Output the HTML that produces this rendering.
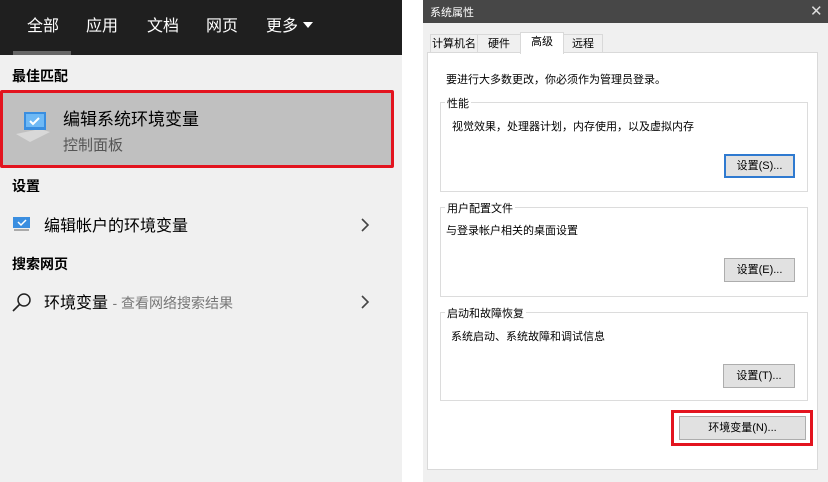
<!DOCTYPE html>
<html><head><meta charset="utf-8"><style>
*{margin:0;padding:0;box-sizing:border-box}
body{width:828px;height:482px;background:#fff;position:relative;overflow:hidden;font-family:"Liberation Sans","Noto Sans CJK SC",sans-serif;color:#000}
.a{position:absolute;white-space:nowrap}
.btn{position:absolute;background:#e1e1e1;border:1px solid #adadad;font-size:11px;text-align:center;color:#000}
.grp{position:absolute;border:1px solid #dcdcdc}
.gl{position:absolute;background:#fff;font-size:11px;padding:0 2px;top:-8px;left:4px}
.tab{position:absolute;border:1px solid #d9d9d9;background:#f0f0f0;font-size:11px;text-align:center;line-height:18px}
</style></head><body>
<div class="a" style="left:0;top:0;width:402px;height:55px;background:#1f1f1f"></div>
<div class="a" style="left:13px;top:51px;width:58px;height:4px;background:#666"></div>
<div class="a" style="left:27px;top:12px;font-size:16px;color:#fff">全部</div>
<div class="a" style="left:86px;top:12px;font-size:16px;color:#fff">应用</div>
<div class="a" style="left:147px;top:12px;font-size:16px;color:#fff">文档</div>
<div class="a" style="left:206px;top:12px;font-size:16px;color:#fff">网页</div>
<div class="a" style="left:266px;top:12px;font-size:16px;color:#fff">更多</div>
<svg class="a" style="left:302px;top:21px" width="12" height="8"><path d="M1 1h10L6 7z" fill="#fff"/></svg>
<div class="a" style="left:0;top:55px;width:402px;height:427px;background:#f0f0f0"></div>
<div class="a" style="left:12px;top:66px;font-size:14px;font-weight:bold">最佳匹配</div>
<div class="a" style="left:0;top:90px;width:394px;height:78px;background:#c0c0c0;border:3px solid #e3141f;border-radius:2px"></div>
<svg class="a" style="left:14px;top:106px" width="36" height="36"><path d="M2 28l14 8 20-10-10-3z" fill="#d8d8d8"/><rect x="10" y="6" width="22" height="18" fill="#3a8ee0"/><rect x="12" y="8" width="18" height="13" fill="#6fb9f5"/><path d="M16 15l3 3 6-6" stroke="#fff" stroke-width="2" fill="none"/></svg>
<div class="a" style="left:63px;top:105px;font-size:17px">编辑系统环境变量</div>
<div class="a" style="left:63px;top:134px;font-size:15px;color:#555">控制面板</div>
<div class="a" style="left:12px;top:176px;font-size:14px;font-weight:bold">设置</div>
<svg class="a" style="left:12px;top:216px" width="20" height="16"><rect x="1" y="1" width="17" height="11" fill="#3a8ee0"/><path d="M6 6l3 3 5-5" stroke="#fff" stroke-width="1.5" fill="none"/><rect x="2" y="13" width="15" height="2" fill="#aaa"/></svg>
<div class="a" style="left:44px;top:212px;font-size:16px">编辑帐户的环境变量</div>
<svg class="a" style="left:360px;top:218px" width="10" height="14"><path d="M2 1l6 6-6 6" stroke="#444" stroke-width="1.6" fill="none"/></svg>
<div class="a" style="left:12px;top:254px;font-size:14px;font-weight:bold">搜索网页</div>
<svg class="a" style="left:11px;top:291px" width="22" height="22"><circle cx="13" cy="9" r="6" stroke="#222" stroke-width="1.5" fill="none"/><path d="M9 13L2 20" stroke="#222" stroke-width="1.6"/></svg>
<div class="a" style="left:44px;top:289px;font-size:16px">环境变量 <span style="font-size:14px;color:#777">- 查看网络搜索结果</span></div>
<svg class="a" style="left:360px;top:295px" width="10" height="14"><path d="M2 1l6 6-6 6" stroke="#444" stroke-width="1.6" fill="none"/></svg>
<div class="a" style="left:423px;top:0;width:405px;height:482px;background:#f0f0f0"></div>
<div class="a" style="left:423px;top:0;width:405px;height:23px;background:#474747"></div>
<div class="a" style="left:430px;top:4px;font-size:11px;color:#fff">系统属性</div>
<div class="a" style="left:810px;top:2px;font-size:15px;color:#ddd">✕</div>
<div class="a" style="left:427px;top:52px;width:391px;height:418px;background:#fff;border:1px solid #d9d9d9"></div>
<div class="tab" style="left:430px;top:34px;width:48px;height:19px">计算机名</div>
<div class="tab" style="left:477px;top:34px;width:44px;height:19px">硬件</div>
<div class="tab" style="left:520px;top:32px;width:44px;height:22px;border-bottom:none;background:#fff;line-height:18px">高级</div>
<div class="tab" style="left:563px;top:34px;width:40px;height:19px">远程</div>
<div class="a" style="left:446px;top:71px;font-size:11px">要进行大多数更改，你必须作为管理员登录。</div>
<div class="grp" style="left:440px;top:102px;width:368px;height:90px"><span class="gl">性能</span></div>
<div class="a" style="left:452px;top:118px;font-size:11px">视觉效果，处理器计划，内存使用，以及虚拟内存</div>
<div class="btn" style="left:724px;top:154px;width:71px;height:24px;border:2px solid #2f7ad0;line-height:20px">设置(S)...</div>
<div class="grp" style="left:440px;top:207px;width:368px;height:90px"><span class="gl">用户配置文件</span></div>
<div class="a" style="left:446px;top:222px;font-size:11px">与登录帐户相关的桌面设置</div>
<div class="btn" style="left:724px;top:258px;width:71px;height:24px;line-height:22px">设置(E)...</div>
<div class="grp" style="left:440px;top:312px;width:368px;height:89px"><span class="gl">启动和故障恢复</span></div>
<div class="a" style="left:451px;top:328px;font-size:11px">系统启动、系统故障和调试信息</div>
<div class="btn" style="left:723px;top:364px;width:72px;height:24px;line-height:22px">设置(T)...</div>
<div class="a" style="left:671px;top:410px;width:142px;height:36px;border:3px solid #e3141f"></div>
<div class="btn" style="left:679px;top:416px;width:127px;height:24px;line-height:22px">环境变量(N)...</div>
</body></html>
